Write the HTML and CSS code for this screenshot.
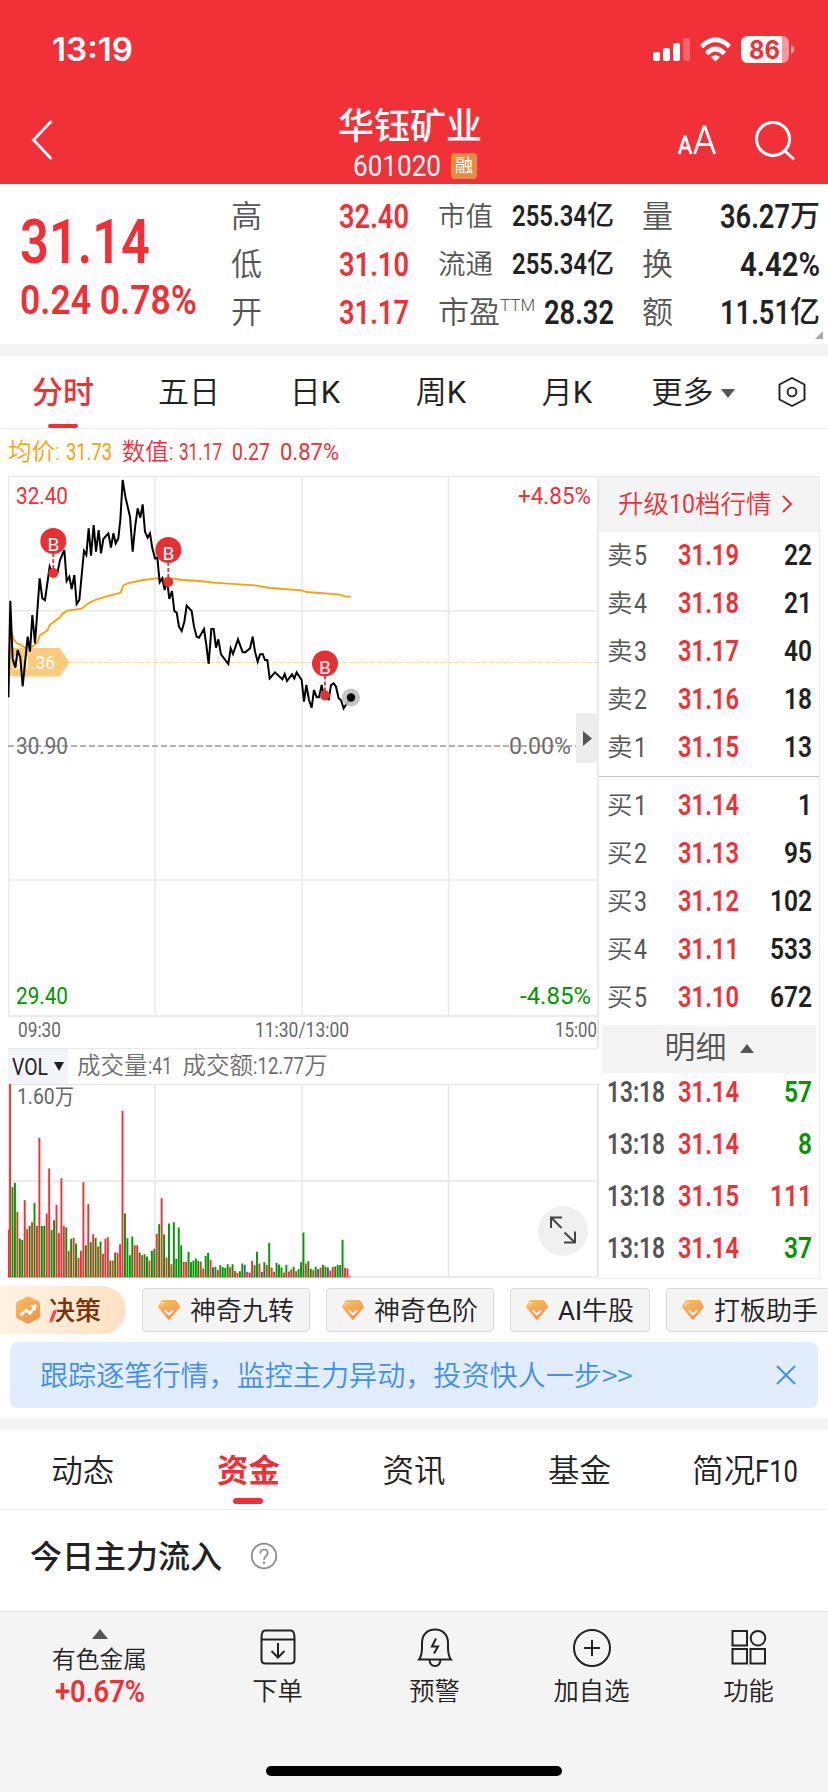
FILE: index.html
```html
<!DOCTYPE html>
<html lang="zh-CN">
<head>
<meta charset="utf-8">
<title>华钰矿业 601020</title>
<link rel="stylesheet" href="styles.css">
</head>
<body>
<svg class="defs" width="0" height="0">
  <defs>
    <linearGradient id="gold" x1="0" y1="0" x2="0.6" y2="1"><stop offset="0" stop-color="#fcc062"/><stop offset="1" stop-color="#f0944a"/></linearGradient>
    <symbol id="gem" viewBox="0 0 22 20"><path d="M5 0h12q1 0 1.6.9L21.6 6q.6 1-.2 2L12 19.300q-1 1-2 0L.6 8q-.8-1-.2-2L3.400.900Q4 0 5 0z" fill="url(#gold)"/><path d="M7 10.500l4 4 4-4" fill="none" stroke="#fff" stroke-width="1.800"/><path d="M3 5.500l2-3h2" fill="none" stroke="#ffe3b8" stroke-width="1.200"/></symbol>
  </defs>
</svg>
<header class="header">
  <div class="status">
    <span class="clock" data-w="81">13:19</span>
    <svg class="status-icons" width="144" height="40" viewBox="652 30 144 40">
      <g fill="#fff"><rect x="653" y="52" width="7" height="9" rx="2"/><rect x="663" y="48" width="7" height="13" rx="2"/><rect x="673" y="43" width="7" height="18" rx="2"/><rect x="683" y="38" width="7" height="23" rx="2" opacity=".25"/></g>
      <g fill="none" stroke="#fff" stroke-width="4.600"><path d="M701.500 46.500Q715.500 33 729.500 46.500"/><path d="M706.500 53.500Q715.500 44.500 724.500 53.500"/></g>
      <path d="M711 57q4.500-3.500 9 0l-4.500 4.500z" fill="#fff"/>
      <path d="M782 36h0q7 0 7 8v11q0 8-7 8z" fill="#fff" opacity=".5"/><path d="M791 45q3.500 1.500 3.500 4.500t-3.500 4.500z" fill="#fff" opacity=".5"/>
      <path d="M748 36h34v27h-34q-7 0-7-8V44q0-8 7-8z" fill="#fff"/>
      <text x="749" y="58.500" class="battery" textLength="31" lengthAdjust="spacingAndGlyphs">86</text>
    </svg>
  </div>
  <div class="nav">
    <svg class="back" width="24" height="42" viewBox="0 0 24 42"><path d="M21.500 2L3.500 21l18 19" fill="none" stroke="#fff" stroke-width="2.800"/></svg>
    <div class="title"><div class="name">华钰矿业</div><div class="code"><span data-w="88">601020</span><i class="badge">融</i></div></div>
    <svg class="tools" width="122" height="44" viewBox="676 119 122 44"><g fill="none" stroke="#fff" stroke-width="2.800"><path d="M679 154l5.500-17h1l5.500 17M681 148h8.500"/><path d="M694.500 154l9.300-27h1.200l9.700 27M698 144.500h13.500"/></g><g fill="none" stroke="#fff" stroke-width="3"><circle cx="773" cy="139" r="16.500"/><path d="M785 151l9 8.500"/></g></svg>
  </div>
</header>
<section class="quote">
  <div class="last"><div class="price"><span data-w="130">31.14</span></div><div class="chg"><span data-w="177">0.24 0.78%</span></div></div>
  <dl class="c1"><dt>高</dt><dd><b data-w="70">32.40</b></dd><dt>低</dt><dd><b data-w="70">31.10</b></dd><dt>开</dt><dd><b data-w="70">31.17</b></dd></dl>
  <dl class="c2"><dt class="sm">市值</dt><dd class="sm"><b data-w="75">255.34</b><em>亿</em></dd><dt class="sm">流通</dt><dd class="sm"><b data-w="75">255.34</b><em>亿</em></dd><dt>市盈<sup>TTM</sup></dt><dd><b data-w="70">28.32</b></dd></dl>
  <dl class="c3"><dt>量</dt><dd><b data-w="70">36.27</b><em>万</em></dd><dt>换</dt><dd><b data-w="80">4.42%</b></dd><dt>额</dt><dd><b data-w="70">11.51</b><em>亿</em></dd></dl>
  <i class="corner"></i>
</section>
<nav class="periods">
  <span class="on">分时</span><span>五日</span><span>日<b>K</b></span><span>周<b>K</b></span><span>月<b>K</b></span><span>更多<i class="tri"></i></span>
  <svg width="30" height="32" viewBox="0 0 30 32"><g fill="none" stroke="#222" stroke-width="1.900"><path d="M15 2l12.500 6.500v15L15 30 2.500 23.500v-15z"/><circle cx="15" cy="16" r="4.400"/></g></svg>
</nav>
<div class="readout"><span class="avg">均价: <b data-w="46">31.73</b></span><span class="val">数值: <b data-w="43">31.17</b><b data-w="38">0.27</b><b data-w="59">0.87%</b></span></div>
<main class="board">
  <div class="left">
    <svg class="chart" width="591" height="572" viewBox="8 476 591 572">
      <g stroke="#e9e9e9" stroke-width="1.500" fill="none"><path d="M8.500 476.500H599M8.500 476v540M155 476v540M302 476v540M448.500 476v540M8 611h590M8 880h590"/><path d="M8 1016h590" stroke-width="2"/><path d="M598 476v572" stroke-width="2"/></g>
      <path d="M69 662.500H598" stroke="#fcd79a" stroke-width="1.200" stroke-dasharray="5 2"/>
      <path d="M8 648h52l9.500 14.500L60 676.500H8z" fill="#fdcb7c"/>
      <text class="tx" x="12" y="669" fill="#fff" textLength="43" lengthAdjust="spacingAndGlyphs" font-size="18">31.36</text>
      <path d="M8 746H576" stroke="#999" stroke-width="1.600" stroke-dasharray="6 3"/>
      <g class="curves" transform="translate(0 465) scale(.33333)" fill="none" stroke-linejoin="miter">
        <polyline stroke="#ff9f0a" stroke-width="5.500" points="25,697 31,490 40,522 50,535 60,538 75,548 97,545 112,533 120,510 142,497 149,480 180,457 186,447 202,437 245,431 265,415 285,405 320,394 355,385 362,383 370,362 385,354 430,345 470,340 520,341 545,345 600,348 640,353 765,361 810,369 905,376 920,381 1020,389 1035,394 1052,395"/>
        <polyline stroke="#000" stroke-width="6" points="25,697 31,407 38,582 46,608 53,555 61,578 68,664 83,515 90,560 97,450 105,535 119,340 127,400 135,405 149,305 158,325 172,325 180,285 193,255 200,348 208,335 215,372 223,330 230,417 238,405 252,258 259,270 266,190 273,272 281,180 288,260 296,195 303,265 310,222 325,205 333,248 340,205 347,235 355,220 361,165 368,45 376,95 390,155 398,260 406,180 413,130 421,158 428,118 435,200 443,218 450,205 457,250 465,280 472,278 479,352 487,340 494,375 501,345 508,402 516,378 523,438 530,443 537,485 545,498 553,470 560,422 575,438 582,485 590,515 597,518 612,492 619,540 626,597 634,492 641,492 648,548 655,523 663,568 685,597 692,550 699,567 714,523 728,562 736,562 750,550 758,515 765,560 773,590 780,568 788,567 795,585 802,585 809,640 825,622 847,643 854,627 861,648 876,628 883,640 890,622 905,645 912,710 919,660 927,705 935,728 942,675 950,697 957,697 965,660 972,697 986,703 993,660 1001,655 1008,665 1016,700 1023,705 1031,730 1052,697"/>
      </g>
      <circle cx="351" cy="697.500" r="9" fill="#bbb" opacity=".85"/><circle cx="351" cy="697.500" r="4.200"/>
      <g id="pins"></g>
      <g class="tx" font-size="24">
        <text x="16" y="504" fill="#f22f36" textLength="52" lengthAdjust="spacingAndGlyphs">32.40</text>
        <text x="518" y="504" fill="#f22f36" textLength="73" lengthAdjust="spacingAndGlyphs">+4.85%</text>
        <text x="16" y="754" fill="#6e6e6e" textLength="52" lengthAdjust="spacingAndGlyphs">30.90</text>
        <text x="509" y="754" fill="#6e6e6e" textLength="62" lengthAdjust="spacingAndGlyphs">0.00%</text>
        <text x="16" y="1004" fill="#009600" textLength="52" lengthAdjust="spacingAndGlyphs">29.40</text>
        <text x="520" y="1004" fill="#009600" textLength="71" lengthAdjust="spacingAndGlyphs">-4.85%</text>
      </g>
      <path d="M576 713h23v50h-23z" fill="#ededed"/><path d="M583 731l9 7.500-9 7.500z" fill="#555"/>
      <g class="tx" font-size="20.500" fill="#666"><text x="18" y="1037" textLength="43" lengthAdjust="spacingAndGlyphs">09:30</text><text x="255" y="1037" textLength="94" lengthAdjust="spacingAndGlyphs">11:30/13:00</text><text x="555" y="1037" textLength="42" lengthAdjust="spacingAndGlyphs">15:00</text></g>
    </svg>
    <div class="volbar"><span class="vol"><b data-w="36">VOL</b><i class="tri"></i></span><span class="voltxt">成交量<b data-w="24">:41</b></span><span class="voltxt">成交额<b data-w="51">:12.77</b>万</span></div>
    <svg class="volume" width="591" height="194" viewBox="8 1084 591 194">
      <g stroke="#e6e6e6" stroke-width="1.500" fill="none"><path d="M8 1084.500h590M8.500 1084v193M155 1084v193M302 1084v193M448.500 1084v193M8 1181h590M8 1277h591"/><path d="M598 1084v193" stroke-width="2"/></g>
      <g id="bars"></g>
      <text class="tx" x="17" y="1103.500" font-size="22" fill="#666" textLength="57" lengthAdjust="spacingAndGlyphs">1.60万</text>
      <circle cx="563" cy="1231" r="25" fill="#f0f0f0"/>
      <g fill="none" stroke="#444" stroke-width="2"><path d="M562 1217.500h-11v10.500M551 1217.500l10.500 10.500M564.500 1232.500l10.500 10M564 1242.500h11v-11"/></g>
    </svg>
  </div>
  <aside class="depth">
    <div class="upgrade"><span>升级<b data-w="26">10</b>档行情</span><svg width="12" height="20" viewBox="0 0 12 20"><path d="M2 2l8 8-8 8" fill="none" stroke="#f22f36" stroke-width="2"/></svg></div>
    <div class="rows" id="sell"></div>
    <div class="rows buy" id="buy"></div>
    <div class="detail"><span>明细</span><i class="up"></i></div>
    <div class="ticks" id="ticks"></div>
  </aside>
</main>
<div class="chips">
  <span class="decide"><svg width="26" height="28" viewBox="0 0 26 28"><path d="M11 1q2-1 4 0l8.500 4.500q1.500 1 1.500 3v11q0 2-1.500 3L15 27q-2 1-4 0l-8.500-4.500Q1 21.500 1 19.500v-11q0-2 1.500-3z" fill="url(#gold)"/><path d="M5.500 19.500l6-5.500 3.500 3.500 5-7" fill="none" stroke="#fff" stroke-width="2.600"/><path d="M15 9.500l6.800-1-1.200 6.600z" fill="#fff"/></svg><span class="word">决策</span><svg class="dash" width="10" height="15" viewBox="0 0 10 15"><path d="M5 3l4-2-4 12-4 2z" fill="#ff4558"/></svg></span>
  <span class="chip"><svg width="22" height="20"><use href="#gem"/></svg><span>神奇九转</span></span>
  <span class="chip"><svg width="22" height="20"><use href="#gem"/></svg><span>神奇色阶</span></span>
  <span class="chip ai"><svg width="22" height="20"><use href="#gem"/></svg><span><b>AI</b>牛股</span></span>
  <span class="chip last-chip"><svg width="22" height="20"><use href="#gem"/></svg><span>打板助手</span></span>
</div>
<div class="banner"><span>跟踪逐笔行情，监控主力异动，投资快人一步&gt;&gt;</span><svg width="22" height="22" viewBox="0 0 22 22"><path d="M2 2l18 18M20 2L2 20" stroke="#438ff0" stroke-width="2"/></svg></div>
<nav class="sections"><span>动态</span><span class="on">资金</span><span>资讯</span><span>基金</span><span>简况<b data-w="43">F10</b></span></nav>
<div class="inflow"><h2>今日主力流入</h2><svg width="28" height="28" viewBox="0 0 28 28"><g fill="none" stroke="#888" stroke-width="1.700"><circle cx="14" cy="14" r="12.300"/><path d="M10.300 11.500q0-4 3.700-4t3.700 3.500q0 1.700-1.800 3.200Q14 15.700 14 17.700"/></g><circle cx="14" cy="20.700" r="1.200" fill="#888"/></svg></div>
<footer class="bottom">
  <div class="dock">
    <div class="sector"><i class="up"></i><span class="sname">有色金属</span><b data-w="90">+0.67%</b></div>
    <div class="item"><svg width="38" height="40" viewBox="0 0 38 40"><g fill="none" stroke="#222" stroke-width="2"><path d="M6 2.500h26q3.500 0 3.500 8v21q0 4-4 4h-25q-4 0-4-4v-21q0-8 3.500-8zM2.500 11.500h33M19 15v14M12.500 23l6.500 6.500 6.500-6.500"/></g></svg><span>下单</span></div>
    <div class="item"><svg width="38" height="40" viewBox="0 0 38 40"><g fill="none" stroke="#222" stroke-width="2"><path d="M3 31.500q3-4 3-12V15C6 7 11 1.500 19 1.500S32 7 32 15v4.500q0 8 3 12zM13.500 32q.5 6 5.500 6t5.500-6M20 10.500l-4 8h6l-4 7"/></g></svg><span>预警</span></div>
    <div class="item"><svg width="40" height="40" viewBox="0 0 40 40"><g fill="none" stroke="#222" stroke-width="2"><circle cx="20" cy="20" r="18"/><path d="M20 12v16M12 20h16"/></g></svg><span>加自选</span></div>
    <div class="item"><svg width="38" height="40" viewBox="0 0 38 40"><g fill="none" stroke="#222" stroke-width="2"><rect x="2.500" y="3" width="14.500" height="14.500"/><rect x="2.500" y="21" width="14.500" height="14.500"/><rect x="20.500" y="21" width="14.500" height="14.500"/><circle cx="28" cy="10.200" r="7.300"/></g></svg><span>功能</span></div>
  </div>
  <div class="home"></div>
</footer>
<script src="app.js"></script>
</body>
</html>
```
FILE: styles.css
```css
* { box-sizing: border-box; margin: 0; padding: 0; }
body { width: 828px; height: 1792px; overflow: hidden; background: #fff; color: #222; font-family: Roboto, "Noto Sans CJK SC", sans-serif; }
i, em { font-style: normal; }
b { font-weight: 400; }
svg { display: block; flex: none; }
.defs { position: absolute; }
[data-w] { display: inline-block; white-space: nowrap; }
[data-w] > span { display: inline-block; transform-origin: 0 50%; }

.header { height: 184px; background: #f23038; color: #fff; }
.status { display: flex; justify-content: space-between; padding: 30px 32px 0 52px; height: 95px; }
.clock { font: 600 32px/40px Inter, sans-serif; }
.battery { font: 700 25px Inter, sans-serif; fill: #f23038; }
.nav { display: flex; height: 89px; }
.back { margin: 24px 0 0 30px; }
.title { width: 180px; margin-left: 270px; }
.name { width: 172px; font-size: 36px; font-weight: 500; line-height: 36px; margin-top: 14px; text-align: center; }
.code { display: flex; font-size: 30px; line-height: 30px; margin: 6px 0 0 29px; gap: 10px; }
.badge { width: 26px; height: 26px; margin-top: 2px; border-radius: 4px; background: #e38c46; font-size: 18px; line-height: 26px; text-align: center; }
.tools { margin: 24px 0 0 172px; }

.quote { position: relative; display: flex; height: 160px; padding-top: 8px; }
.last { width: 231px; padding-left: 20px; color: #f22f36; font-weight: 600; }
.price { font-size: 62px; line-height: 62px; margin-top: 19px; }
.chg { font-size: 40px; line-height: 40px; margin-top: 8px; }
dl { display: grid; grid-template-columns: 60px 1fr; grid-auto-rows: 48px; line-height: 48px; }
dt { font-size: 31px; color: #555; font-weight: 350; white-space: nowrap; padding-top: 1px; }
dd { display: flex; justify-content: flex-end; font-size: 34px; font-weight: 600; }
dd b { font-weight: 600; }
dd em { font-size: 30px; font-weight: 500; }
dt.sm { font-size: 27.500px; }
dd.sm { font-size: 30px; }
dd.sm em { font-size: 27px; }
dt sup { font-size: 17px; line-height: 0; vertical-align: 12px; font-weight: 300; }
.c1 { width: 178px; }
.c1 dd { color: #f22f36; }
.c2 { width: 176px; margin-left: 29px; }
.c3 { width: 178px; margin-left: 28px; }
.corner { position: absolute; right: 5px; bottom: 5px; border: solid transparent; border-width: 0 0 8px 8px; border-bottom-color: #aaa; }

.periods { display: grid; grid-template-columns: repeat(6, 126px) 72px; align-items: center; justify-items: center; height: 85px; border-top: 12px solid #f4f4f4; border-bottom: 1px solid #ececec; font-size: 31px; line-height: 72px; font-weight: 350; }
.periods span { position: relative; height: 72px; padding-top: 2px; display: flex; align-items: center; }
.periods .on { color: #f22f36; font-weight: 500; }
.periods .on::after { content: ""; position: absolute; bottom: 0; left: 50%; margin-left: -15px; width: 30px; height: 4px; border-radius: 2px; background: #f22f36; }
.tri { border: 7px solid transparent; border-top: 9px solid #555; border-bottom: 0; margin-left: 7px; }
.up { border: 7px solid transparent; border-bottom: 9px solid #555; border-top: 0; }

.readout { display: flex; gap: 10px; height: 47px; padding: 1px 8px 0; font-size: 23.500px; line-height: 44px; font-weight: 350; }
.readout .avg { color: #ffa00a; }
.readout .val { color: #f22f36; }
.val b + b { margin-left: 10px; }

.board { display: flex; height: 803px; padding-left: 8px; }
.left { width: 591px; }
.tx { font-family: Roboto, "Noto Sans CJK SC", sans-serif; }
.volbar { display: flex; height: 36px; border-top: 1px solid #e9e9e9; font-size: 23.500px; line-height: 34px; font-weight: 350; color: #6e6e6e; gap: 9px; }
.voltxt + .voltxt { margin-left: 2px; }
.vol { display: flex; align-items: center; width: 60px; padding-left: 4px; background: #f3f4f7; color: #222; }
.vol .tri { border-width: 9px 5px 0; border-top-color: #222; margin-left: 6px; }
.depth { width: 221px; border: 1px solid #e9e9e9; border-left: 0; }
.upgrade { display: flex; align-items: center; height: 55px; padding: 0 0 2px 19px; gap: 9px; background: #f4f4f4; color: #f22f36; font-size: 25.500px; font-weight: 350; }
.upgrade span { line-height: 48px; }
.rows { display: grid; grid-auto-rows: 48px; line-height: 47px; height: 244px; }
.rows.buy { border-top: 1px solid #c4c4c4; height: 249px; padding-top: 5px; }
.row { display: grid; grid-template-columns: 71px 1fr auto; padding: 0 7px 0 8px; font-size: 29.500px; font-weight: 600; }
.row .lv { display: flex; color: #555; font-size: 25.500px; font-weight: 350; gap: 1px; }
.row .lv b { font-size: 28px; }
.row .lv.t { font-size: 29.500px; font-weight: 600; }
.row .p { color: #f22f36; }
.red { color: #f22f36; }
.green { color: #009600; }
.detail { display: flex; align-items: center; justify-content: center; gap: 13px; height: 48px; margin: 0 3px; background: #f4f4f4; color: #555; font-size: 31px; font-weight: 350; }
.detail span { line-height: 42px; padding-bottom: 2px; }
.detail .up { margin-bottom: 1px; }
.ticks { display: grid; grid-auto-rows: 52px; line-height: 38px; }

.chips { display: flex; height: 65px; padding-top: 7px; white-space: nowrap; overflow: hidden; font-size: 26px; line-height: 40px; }
.decide { position: relative; display: flex; align-items: center; gap: 8px; flex: none; width: 126px; height: 48px; padding-left: 15px; border-radius: 0 24px 24px 0; background: linear-gradient(90deg, #fff3e4, #ffe1c3); color: #7a3408; font-weight: 500; }
.word { padding-top: 1px; }
.dash { position: absolute; left: 48px; bottom: 11px; }
.chip { display: flex; align-items: center; gap: 10px; flex: none; width: 168px; height: 44px; margin: 2px 0 0 16px; padding-left: 15px; border: 1px solid #d8d8d8; border-radius: 4px; background: #f4f4f4; font-weight: 350; }
.chip span { padding-top: 2px; }
.chip.ai { width: 140px; }
.last-chip { width: 180px; }
.banner { display: flex; align-items: center; justify-content: space-between; height: 66px; margin: -2px 10px 0; padding: 0 21px 0 30px; border-radius: 8px; background: #e1edfc; color: #438ff0; font: 350 28.100px "Noto Sans CJK SC", sans-serif; }
.banner span { padding-bottom: 3px; }
.sections { display: grid; grid-template-columns: repeat(5, 1fr); margin-top: 10px; height: 92px; border-top: 12px solid #f4f4f4; border-bottom: 1px solid #ececec; line-height: 83px; font-size: 31.500px; font-weight: 350; text-align: center; }
.sections b { text-align: left; }
.sections .on { position: relative; color: #f22f36; font-weight: 700; }
.sections .on::after { content: ""; position: absolute; bottom: 9px; left: 50%; margin-left: -15px; width: 30px; height: 6px; border-radius: 3px; background: #f22f36; }
.inflow { display: flex; align-items: center; gap: 28px; height: 101px; padding: 0 0 10px 30px; }
.inflow h2 { font-size: 32px; font-weight: 500; padding-bottom: 4px; }
.bottom { height: 181px; background: #f4f4f4; border-top: 1px solid #e6e6e6; }
.dock { display: grid; grid-template-columns: 199px repeat(4, 157px); height: 154px; }
.sector { display: flex; flex-direction: column; align-items: center; padding-top: 17px; }
.sector .up { border-width: 0 8px 10px; }
.sname { font-size: 23.700px; line-height: 28px; margin-top: 7px; font-weight: 350; }
.sector b { color: #f22f36; font-size: 31px; font-weight: 600; line-height: 32px; margin-top: 2px; }
.item { display: flex; flex-direction: column; align-items: center; padding-top: 16px; font-size: 25.300px; font-weight: 350; line-height: 28px; gap: 10px; }
.home { width: 296px; height: 10px; margin: 0 auto; border-radius: 5px; background: #000; }
```
FILE: app.js
```js
const sell = [['5', '31.19', '22'], ['4', '31.18', '21'], ['3', '31.17', '40'], ['2', '31.16', '18'], ['1', '31.15', '13']];
const buy = [['1', '31.14', '1'], ['2', '31.13', '95'], ['3', '31.12', '102'], ['4', '31.11', '533'], ['5', '31.10', '672']];
const ticks = [['13:18', '31.14', '57', 'green'], ['13:18', '31.14', '8', 'green'], ['13:18', '31.15', '111', 'red'], ['13:18', '31.14', '37', 'green']];
const qty = (q, c = '') => `<span class="${c}" data-w="${q.length * 14}">${q}</span>`;
const level = side => ([n, p, q]) => `<div class="row"><span class="lv">${side}<b data-w="13">${n}</b></span><span class="p"><span data-w="61">${p}</span></span>${qty(q)}</div>`;
document.getElementById('sell').innerHTML = sell.map(level('卖')).join('');
document.getElementById('buy').innerHTML = buy.map(level('买')).join('');
document.getElementById('ticks').innerHTML = ticks.map(([t, p, q, c]) => `<div class="row"><span class="lv t"><span data-w="58">${t}</span></span><span class="p"><span data-w="61">${p}</span></span>${qty(q, c)}</div>`).join('');

// Volume per minute; r = up, g = down, k = flat
const volumes = 'r143 r581 g271 g284 r197 g117 g113 r232 r145 g155 r166 g224 r155 r419 g155 g155 r192 r327 g143 g172 r218 r133 r298 r155 g150 r80 g116 r119 g102 r59 r80 r286 g97 r220 g106 r130 g119 r93 g108 r71 r116 r121 g51 r51 g75 r74 r100 r500 g192 g118 g67 g123 r97 r97 g75 r67 g70 g63 r51 g80 g86 r131 g160 r238 g129 r60 g162 r40 g166 g56 g150 g97 r47 r47 g77 g46 g51 g57 g50 r48 r27 g65 g74 r53 k31 g32 r23 g37 g31 g29 g40 r31 g40 r20 r14 g19 g42 k38 r17 k15 r50 g37 g77 r42 k17 g46 r38 g104 r30 r17 g44 g39 g30 r15 g38 r18 r25 g32 r19 g25 g46 g135 r42 g49 g26 r22 g32 k25 r30 g38 g33 k30 r21 r32 g33 g38 k37 g113 r29 r27 r3'.split(' ');
const fill = { r: '#f22f36', g: '#009600', k: '#555577' };
document.getElementById('bars').innerHTML = volumes.map((v, i) => {
  const h = v.slice(1) / 3;
  const x = i ? 9.100 + (i - 1) * 2.445 : 8;
  return `<rect x="${x.toFixed(2)}" y="${(1277.500 - h).toFixed(1)}" width="${i ? 1.900 : 1}" height="${h.toFixed(1)}" fill="${fill[v[0]]}"/>`;
}).join('');

// Buy markers
document.getElementById('pins').innerHTML = [[53.300, 541], [168.300, 550], [325, 663.500]].map(([x, y]) => `<path d="M${x} ${y + 12}v16" stroke="#e83034" stroke-width="1.800" stroke-dasharray="4 2"/><circle cx="${x}" cy="${y}" r="13" fill="#e83034"/><circle cx="${x}" cy="${y + 32}" r="5" fill="#e83034"/><text class="tx" x="${x}" y="${y + 10}" font-size="19" fill="#fff" text-anchor="middle">B</text>`).join('');

document.querySelectorAll('[data-w]').forEach(el => {
  const inner = document.createElement('span');
  inner.textContent = el.textContent;
  el.textContent = '';
  el.append(inner);
  const w = +el.dataset.w;
  const scale = w / inner.getBoundingClientRect().width;
  el.style.width = w + 'px';
  inner.style.transform = `scaleX(${scale})`;
});
```
